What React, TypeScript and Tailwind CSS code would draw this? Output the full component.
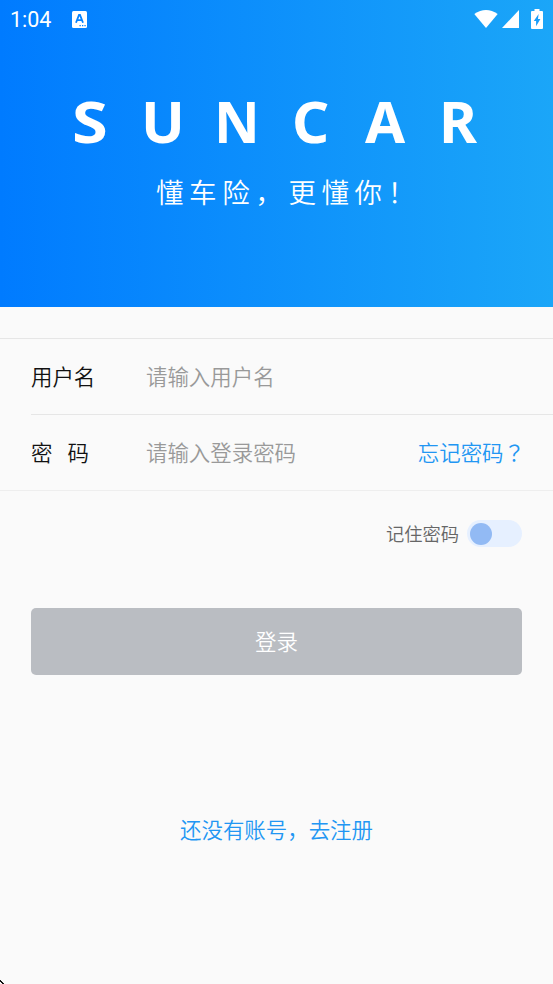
import { useState } from 'react';

const BRAND = [
    { letter: 'S', className: 'w-[69px] origin-left scale-x-112' },
    { letter: 'U', className: 'w-[73px]' },
    { letter: 'N', className: 'w-[78px] origin-left scale-x-97' },
    { letter: 'C', className: 'w-[73px]' },
    { letter: 'A', className: 'w-[74px]' },
    { letter: 'R', className: 'w-[40px]' },
];

function StatusBar() {
    return (
        <div className="flex h-[38px] items-center justify-between pr-[10px] pl-[10px]">
            <div className="flex items-center">
                <span className="w-[62px] pt-[2px] font-[Roboto] text-[21.5px] leading-none font-normal">1:04</span>
                <svg width="15" height="17" viewBox="0 0 15 17">
                    <rect width="15" height="17" rx="1.5" fill="#fff" />
                    <path d="M4 11.8 7 4h1l3 7.8M5.2 9.2h4.6" fill="none" stroke="#0582ff" strokeWidth="1.8" />
                    <path d="M7.5 14h1.3v1.3H7.5zM10 14h1.3v1.3H10zM12.4 14h1.3v1.3h-1.3z" fill="#0582ff" />
                </svg>
            </div>
            <div className="flex items-center">
                <svg width="24" height="18" viewBox="0 0 24 18" className="mr-[4px]">
                    <path d="M0.3 4Q12-4 23.7 4L12 18Z" fill="#fff" />
                </svg>
                <svg width="17" height="18" viewBox="0 0 17 18" className="mr-[12px]">
                    <path d="M17 0v18H0z" fill="#fff" />
                </svg>
                <svg width="12" height="20" viewBox="0 0 12 20">
                    <path d="M3.5 0h5v2H11q1 0 1 1v16q0 1-1 1H1q-1 0-1-1V3q0-1 1-1h2.5z" fill="#fff" />
                    <path d="M7.6 5 2.8 12h2.3v5.2L9.4 10H7z" fill="#189df9" />
                </svg>
            </div>
        </div>
    );
}

export default function App() {
    const [remember, setRemember] = useState(false);

    return (
        <div className="relative h-[984px] w-[553px] overflow-hidden bg-[#fafafa] font-['Noto_Sans_CJK_SC',sans-serif] text-[21.45px] font-[350] text-[#111]">
            <header className="h-[307px] bg-linear-to-r/srgb from-[#007bff] to-[#1ba6f8] text-white">
                <StatusBar />
                <h1 className="mt-[43px] flex pl-[72px] font-['Noto_Sans',sans-serif] text-[58px] leading-[80px] font-bold">
                    {BRAND.map(item => (
                        <span key={item.letter} className={item.className}>{item.letter}</span>
                    ))}
                </h1>
                <p className="mt-[10px] pl-[156px] text-[27.5px] leading-[40px] tracking-[5.6px] whitespace-nowrap">
                    懂车险，更懂你！
                </p>
            </header>

            <main>
                <div className="mt-[31px] border-y border-[#e6e6e6] border-b-[#eee]">
                    <label className="ml-[31px] flex h-[76px] items-center border-b border-[#e6e6e6]">
                        <span className="w-[115px]">用户名</span>
                        <input
                            className="min-w-0 flex-1 outline-none placeholder:text-[#999]"
                            placeholder="请输入用户名"
                        />
                    </label>
                    <div className="ml-[31px] flex h-[75px] items-center pr-[28px]">
                        <span className="flex w-[115px] gap-[15px]">
                            <span>密</span>
                            <span>码</span>
                        </span>
                        <input
                            type="password"
                            className="w-[240px] outline-none placeholder:text-[#999]"
                            placeholder="请输入登录密码"
                        />
                        <a className="ml-auto whitespace-nowrap text-[#2196f3]">
                            忘记密码<span className="font-['Noto_Sans_CJK_TC',sans-serif]" lang="zh-TW">？</span>
                        </a>
                    </div>
                </div>

                <div className="mt-[29px] flex h-[27px] items-center justify-end pr-[31px]">
                    <span className="mr-[8px] text-[18.3px] text-[#666]">记住密码</span>
                    <button
                        type="button"
                        role="switch"
                        aria-checked={remember}
                        onClick={() => setRemember(!remember)}
                        className={`flex h-[27px] w-[55px] items-center rounded-full bg-[#e6f0ff] px-[3px] ${remember ? 'justify-end' : 'justify-start'}`}
                    >
                        <span className="size-[22px] rounded-full bg-[#92baf4]" />
                    </button>
                </div>

                <button
                    type="button"
                    className="mt-[61px] ml-[31px] flex h-[67px] w-[491px] items-center justify-center rounded-[5px] bg-[#babdc2] text-white"
                >
                    登录
                </button>

                <a className="mt-[138px] block text-center leading-[32px] text-[#2196f3]">还没有账号，去注册</a>
            </main>

            <svg className="absolute bottom-0 left-0" width="4" height="4" viewBox="0 0 4 4">
                <path d="M0 0h1v1h1v1h1v1h1v1H2V3H1V2H0z" fill="#111" />
            </svg>
        </div>
    );
}
